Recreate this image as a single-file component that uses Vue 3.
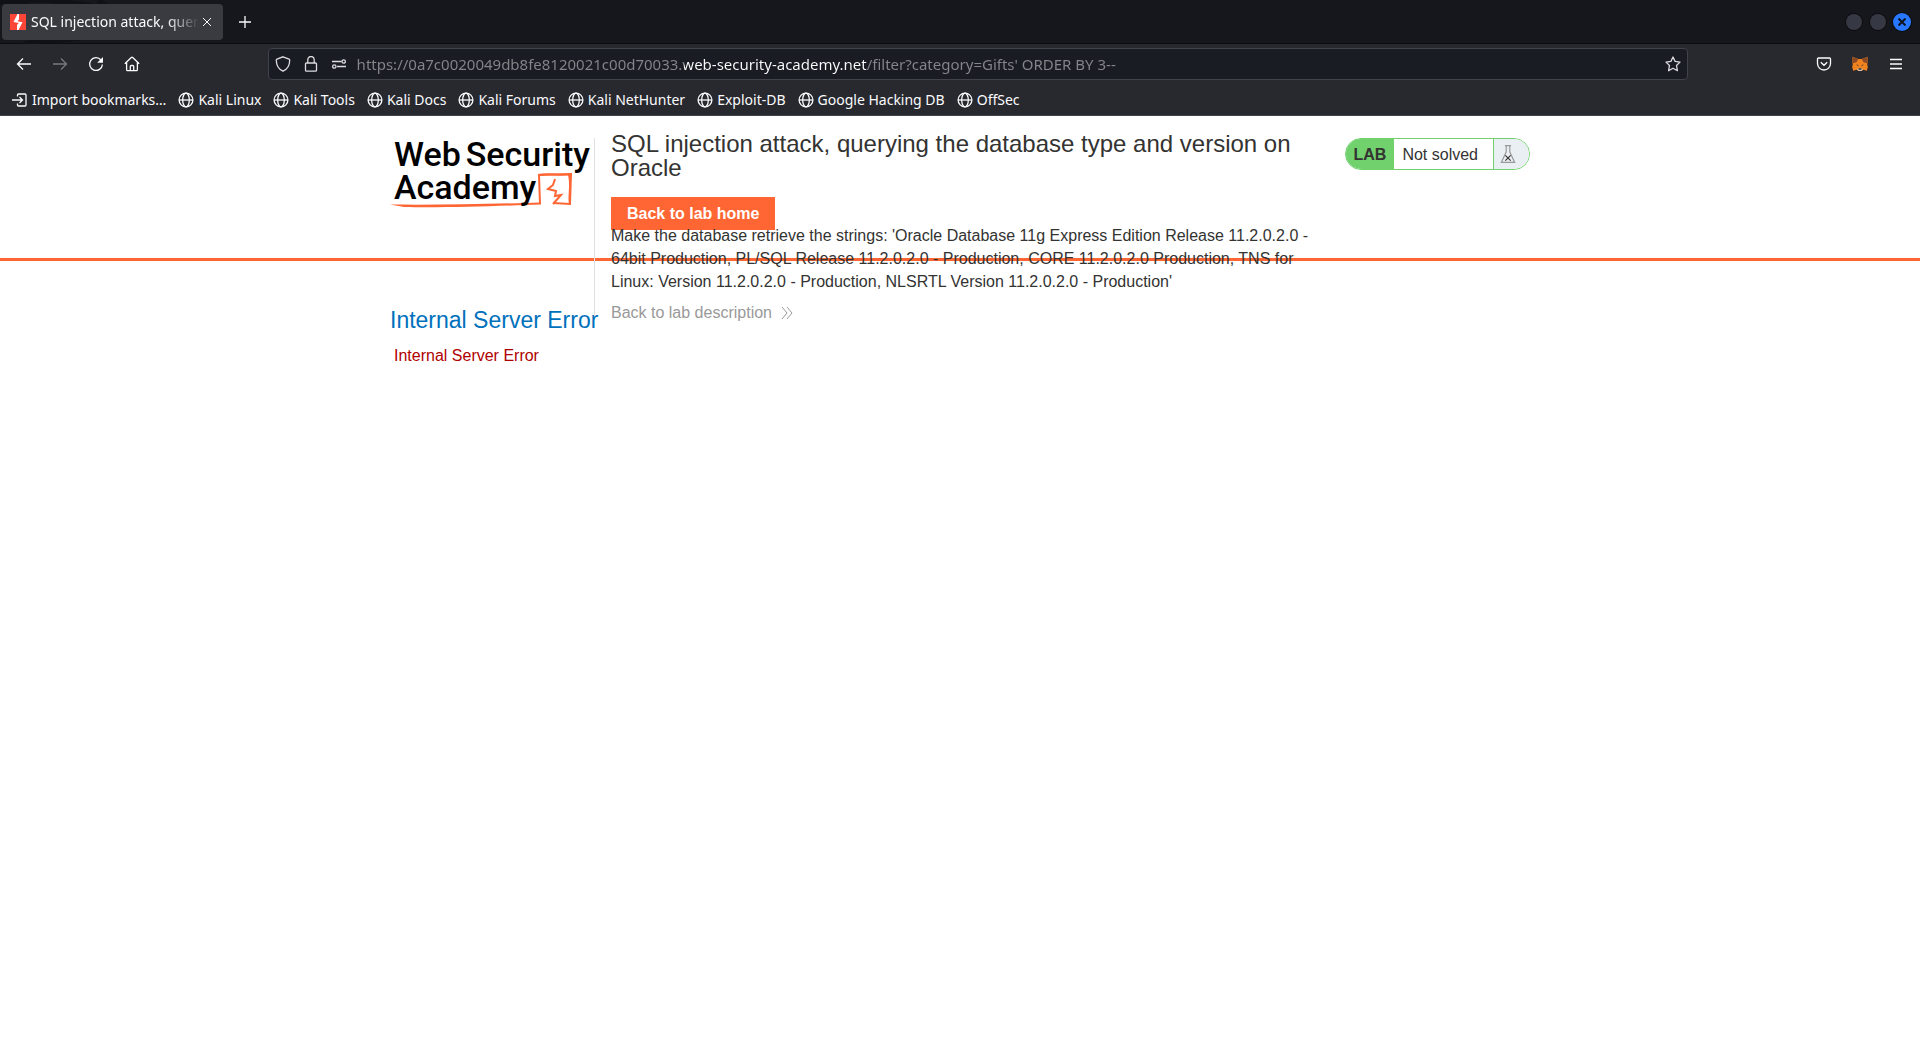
<script setup>
import { ref } from 'vue'

const url = ref("https://0a7c0020049db8fe8120021c00d70033.web-security-academy.net/filter?category=Gifts' ORDER BY 3--")

const bookmarks = [
  'Kali Linux',
  'Kali Tools',
  'Kali Docs',
  'Kali Forums',
  'Kali NetHunter',
  'Exploit-DB',
  'Google Hacking DB',
  'OffSec',
]
</script>

<template>
  <div class="browser">
    <div class="tabs">
      <svg class="dragon" viewBox="0 0 160 44" aria-hidden="true">
        <path d="M0 2H26V0H50C70 4 92 2 106 12M24 44C50 36 84 46 110 26C112 18 108 6 98 0" />
      </svg>
      <div class="tab">
        <svg class="favicon" viewBox="0 0 16 16" aria-hidden="true">
          <rect width="16" height="16" fill="#ff4438" />
          <path d="M7.500 0H9V5.500L7.500 7.300 12.500 8.300 8.500 16H7V11L8.800 9 3.500 8Z" fill="#fff" />
        </svg>
        <span class="tab-title">SQL injection attack, querying</span>
        <button class="tab-close" aria-label="Close tab">
          <svg viewBox="0 0 10 10"><path d="M1 1l8 8M9 1l-8 8" /></svg>
        </button>
      </div>
      <button class="new-tab" aria-label="New tab">
        <svg viewBox="0 0 12 12"><path d="M6 0v12M0 6h12" /></svg>
      </button>
      <div class="window-buttons">
        <button aria-label="Minimize"></button>
        <button aria-label="Maximize"></button>
        <button class="close" aria-label="Close window">
          <svg viewBox="0 0 8 8"><path d="M.5.5l7 7M7.500.5l-7 7" /></svg>
        </button>
      </div>
    </div>

    <div class="toolbar">
      <div class="nav-buttons">
        <button aria-label="Back">
          <svg viewBox="0 0 16 16"><path d="M15 8H1.500M7 2.500 1.500 8 7 13.500" /></svg>
        </button>
        <button class="disabled" aria-label="Forward" disabled>
          <svg viewBox="0 0 16 16"><path d="M1 8h13.500M9 2.500 14.500 8 9 13.500" /></svg>
        </button>
        <button aria-label="Reload">
          <svg viewBox="0 0 16 16">
            <path d="M13 4A6.400 6.400 0 1 0 14.400 8.500" />
            <path d="M15 1v5.800H9.200Z" fill="currentColor" stroke="none" />
          </svg>
        </button>
        <button aria-label="Home">
          <svg viewBox="0 0 16 16">
            <path d="M.8 7.800 7.300 1.500a1 1 0 0 1 1.400 0l6.500 6.300M2.600 6.500v7.200a1 1 0 0 0 1 1h8.800a1 1 0 0 0 1-1V6.500M6.300 14.500v-4a1 1 0 0 1 1-1h1.400a1 1 0 0 1 1 1v4" />
          </svg>
        </button>
      </div>
      <div class="urlbar">
        <button aria-label="Tracking protection">
          <svg viewBox="0 0 16 16"><path d="M8 .8 14 3.200a1 1 0 0 1 .7 1C14.700 9.500 11.500 13.500 8 15.200 4.500 13.500 1.300 9.500 1.300 4.200a1 1 0 0 1 .7-1Z" /></svg>
        </button>
        <button aria-label="Site security">
          <svg viewBox="0 0 16 16"><path d="M3.500 7h9a1 1 0 0 1 1 1v6.200a1 1 0 0 1-1 1h-9a1 1 0 0 1-1-1V8a1 1 0 0 1 1-1ZM4.800 7V3.700a3.200 3.200 0 0 1 6.400 0V7" /></svg>
        </button>
        <button aria-label="Site permissions">
          <svg viewBox="0 0 16 16"><path d="M1 5.500h9.500M6 10.500H15" /><circle cx="12.700" cy="5.500" r="1.700" /><circle cx="3.300" cy="10.500" r="1.700" /></svg>
        </button>
        <input v-model="url" type="text" aria-label="Address" spellcheck="false" />
        <button aria-label="Bookmark this page">
          <svg viewBox="0 0 16 16"><path d="M8 1 10.100 5.400 15 6.100 11.500 9.500 12.400 14.700 8 12.300 3.600 14.700 4.500 9.500 1 6.100 5.900 5.400Z" stroke-linejoin="round" /></svg>
        </button>
      </div>
      <div class="tool-buttons">
        <button aria-label="Save to Pocket">
          <svg viewBox="0 0 16 16"><path d="M2.500 2h11a1 1 0 0 1 1 1v4.500a6.500 6.500 0 0 1-13 0V3a1 1 0 0 1 1-1ZM4.800 6.200 8 9.300l3.200-3.100" /></svg>
        </button>
        <button aria-label="Wallet extension">
          <svg viewBox="0 0 16 16" class="fox">
            <path d="M.6.8 6.200 3h3.600L15.400.8 16 4l-.8 4.200.6 3-1 3.500-3.500-.9L9.500 15h-3l-1.800-1.200-3.500.9-1-3.500.6-3L0 4Z" fill="#f0831e" />
            <path d="M.6.8 6.200 3 4.500 6.200.8 7.200 0 4ZM15.400.8 9.800 3l1.700 3.200 3.700 1L16 4Z" fill="#8a4a25" />
            <path d="m4 8.300 2.500 1-.3 1ZM12 8.300l-2.500 1 .3 1Z" fill="#30343c" />
            <path d="m4.700 12.800 1.800-.4h3l1.800.4L9.500 15h-3Z" fill="#d5c3b5" />
            <path d="M6.500 12.300h3v1.400h-3Z" fill="#242a30" />
          </svg>
        </button>
        <button aria-label="Open application menu">
          <svg viewBox="0 0 16 16"><path d="M2 3.500h12M2 8h12M2 12.500h12" /></svg>
        </button>
      </div>
    </div>

    <nav class="bookmarks" aria-label="Bookmarks">
      <a href="#">
        <svg viewBox="0 0 16 16"><path d="M5.500 4.500V3a1 1 0 0 1 1-1h6.500a1 1 0 0 1 1 1v10a1 1 0 0 1-1 1H6.500a1 1 0 0 1-1-1v-1.500M0 8h10.500M7.500 5l3 3-3 3" /></svg>
        <span>Import bookmarks…</span>
      </a>
      <a v-for="name in bookmarks" :key="name" href="#">
        <svg viewBox="0 0 16 16"><circle cx="8" cy="8" r="6.900" /><ellipse cx="8" cy="8" rx="3.300" ry="6.900" /><path d="M1 8h14" /></svg>
        <span>{{ name }}</span>
      </a>
    </nav>
  </div>

  <header class="lab-header">
    <div class="container">
      <a class="logo" href="#" aria-label="Web Security Academy">
        <svg viewBox="0 0 204 76" aria-hidden="true">
          <path d="M150 66 149 37 181 36 180 66 163 65" />
          <path d="M148 37C160 35 170 38 182 36M179 37C182 48 178 58 180 66" />
          <path d="M165 41 163 47 158 51 166 53 165 58 171 57 163 66" />
          <path class="underline" d="M0 66.500C50 67 100 66 151 64.500V66.500C110 68 50 70 14 69Z" />
        </svg>
        <span class="logo-line"><span>Web</span><span>Security</span></span>
        <span class="logo-line">Academy</span>
      </a>
      <div class="summary">
        <h2>SQL injection attack, querying the database type and version on Oracle</h2>
        <a class="home-button" href="#">Back to lab home</a>
        <p>Make the database retrieve the strings: 'Oracle Database 11g Express Edition Release 11.2.0.2.0 - 64bit Production, PL/SQL Release 11.2.0.2.0 - Production, CORE 11.2.0.2.0 Production, TNS for Linux: Version 11.2.0.2.0 - Production, NLSRTL Version 11.2.0.2.0 - Production'</p>
        <a class="back-link" href="#">
          Back to lab description
          <svg viewBox="0 0 12 12" aria-hidden="true"><path d="M1 0l5 6-5 6M6 0l5 6-5 6" /></svg>
        </a>
      </div>
      <div class="status">
        <span class="lab">LAB</span>
        <p>Not solved</p>
        <span class="flask">
          <svg viewBox="0 0 18 20" aria-hidden="true">
            <path d="M5.500.5h7M7 .5v7L1.500 19.500h15L11 7.500v-7" stroke="#999" />
            <path d="M6 11.500l6 6M12 11.500l-6 6" stroke="#333" />
          </svg>
        </span>
      </div>
    </div>
  </header>

  <main>
    <h4>Internal Server Error</h4>
    <p>Internal Server Error</p>
  </main>
</template>

<style>
body {
  margin: 0;
  background: #fff;
}
</style>

<style scoped>
button {
  display: flex;
  align-items: center;
  justify-content: center;
  padding: 0;
  border: 0;
  background: none;
  color: inherit;
}

svg {
  display: block;
  flex: none;
  width: 16px;
  height: 16px;
  fill: none;
  stroke: currentColor;
  stroke-width: 1.3;
}

a {
  text-decoration: none;
}

.browser {
  background: #28292e;
  border-bottom: 1px solid #42414d;
  color: #fbfbfe;
  font: 14px/20px "Noto Sans", sans-serif;
}

.tabs {
  position: relative;
  display: flex;
  align-items: center;
  height: 43px;
  padding: 0 9px 0 2px;
  background: #16171c;
  border-bottom: 1px solid #0c0c10;
}

.dragon {
  position: absolute;
  top: 0;
  left: 0;
  width: 160px;
  height: 44px;
  stroke: #101116;
  stroke-width: 5;
}

.tab {
  position: relative;
  display: flex;
  align-items: center;
  width: 221px;
  height: 36px;
  box-sizing: border-box;
  padding: 0 8px;
  border-radius: 4px;
  background: #3a3b40;
}

.favicon,
.fox {
  stroke: none;
}

.tab-title {
  flex: 1;
  margin-left: 5px;
  overflow: hidden;
  white-space: nowrap;
  mask-image: linear-gradient(to left, transparent, #000 32px);
}

.tab-close {
  width: 16px;
  height: 16px;
}

.tab-close svg {
  width: 10px;
  height: 10px;
  stroke-width: 1;
}

.new-tab {
  width: 32px;
  height: 32px;
  margin-left: 6px;
}

.new-tab svg {
  width: 12px;
  height: 12px;
}

.window-buttons {
  display: flex;
  align-items: center;
  gap: 8px;
  margin-left: auto;
}

.window-buttons button {
  width: 16px;
  height: 16px;
  border-radius: 50%;
  background: #363843;
  box-shadow: 0 0 0 1px #0d0e12;
}

.window-buttons .close {
  width: 18px;
  height: 18px;
  margin-left: -1px;
  background: #2777ff;
  color: #0e1420;
}

.window-buttons svg {
  width: 8px;
  height: 8px;
  stroke-width: 2;
}

.toolbar {
  display: flex;
  align-items: center;
  height: 40px;
  padding: 0 6px;
}

.nav-buttons,
.tool-buttons {
  display: flex;
}

.nav-buttons button,
.tool-buttons button {
  width: 36px;
  height: 32px;
}

.disabled {
  color: #77787c;
}

.nav-buttons {
  flex: 1;
  padding-right: 36px;
}

.tool-buttons {
  flex: 1;
  justify-content: flex-end;
}

.urlbar {
  display: flex;
  align-items: center;
  width: 74vw;
  height: 32px;
  box-sizing: border-box;
  border: 1px solid #42434a;
  border-radius: 4px;
  background: #1a1c23;
}

.urlbar button {
  width: 28px;
  height: 28px;
  color: #dcdce0;
}

.urlbar input {
  flex: 1;
  min-width: 0;
  height: 28px;
  margin-left: 4px;
  padding: 0;
  border: 0;
  outline: 0;
  font: 15px "Noto Sans", sans-serif;
  color: transparent;
  caret-color: #fbfbfe;
  background: linear-gradient(to right, #85868a 327px, #fbfbfe 327px 510px, #85868a 510px);
  background-clip: text;
}

.bookmarks {
  display: flex;
  gap: 12px;
  height: 31px;
  padding: 0 12px;
}

.bookmarks a {
  display: flex;
  align-items: center;
  gap: 4px;
  color: #fbfbfe;
  white-space: nowrap;
}

.lab-header {
  height: 142px;
  border-bottom: 3px solid #ff6633;
  color: #333332;
  font: 16px/23px "Liberation Sans", Arial, sans-serif;
}

.container,
main {
  width: 1140px;
  max-width: 100%;
  margin: 0 auto;
}

.container {
  display: flex;
  align-items: flex-start;
}

.logo {
  position: relative;
  display: flex;
  flex-direction: column;
  width: 205px;
  height: 178px;
  margin-top: 22px;
  box-sizing: border-box;
  padding-left: 4px;
  border-right: 1px solid #e0e0e0;
  color: #000;
  font: 500 34px/33px Roboto, sans-serif;
}

.logo-line {
  position: relative;
  display: flex;
  gap: 5px;
}

.logo svg {
  position: absolute;
  top: 0;
  left: 0;
  width: 204px;
  height: 76px;
  stroke: #ff6633;
  stroke-width: 2;
}

.underline {
  fill: #ff6633;
  stroke: none;
}

.summary {
  width: 720px;
  margin: 16px 0 0 16px;
}

h2 {
  margin: 0 0 17px;
  font-size: 24px;
  line-height: 24px;
  font-weight: 400;
}

.home-button {
  display: block;
  width: max-content;
  padding: 0 16px;
  background: #ff6633;
  color: #fff;
  font-weight: 700;
  line-height: 33px;
}

.summary p {
  margin: -6px 0 8px;
}

.back-link {
  display: flex;
  align-items: center;
  gap: 9px;
  color: #999;
}

.back-link svg {
  width: 12px;
  height: 12px;
  stroke-width: 1;
}

.status {
  display: flex;
  height: 32px;
  box-sizing: border-box;
  margin: 22px 0 0 auto;
  overflow: hidden;
  border: 1px solid #71d16d;
  border-radius: 16px;
  line-height: 32px;
}

.lab {
  padding: 0 8px;
  background: #71d16d;
  font-weight: 700;
}

.status p {
  margin: 0;
  padding: 0 15px 0 8px;
}

.flask {
  display: flex;
  align-items: center;
  width: 36px;
  box-sizing: border-box;
  padding-left: 6px;
  border-left: 1px solid #71d16d;
  background: #e9eff2;
}

.flask svg {
  width: 16px;
  height: 20px;
}

main {
  font: 16px/20px "Liberation Sans", Arial, sans-serif;
}

h4 {
  margin: 45px 0 0;
  color: #0071bc;
  font-size: 23px;
  line-height: 28px;
  font-weight: 400;
}

main p {
  margin: 12px 4px;
  color: #b00000;
}
</style>
